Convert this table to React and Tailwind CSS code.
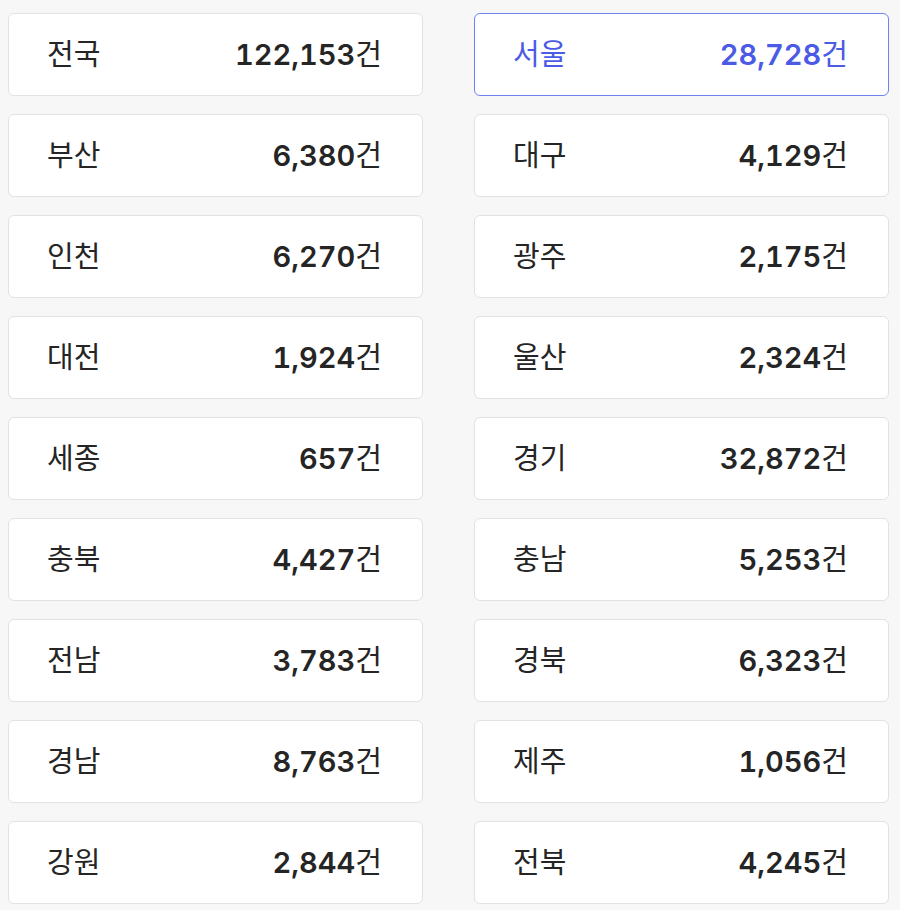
import React from "react";

const data = [
  ["전국", "122,153"],
  ["서울", "28,728"],
  ["부산", "6,380"],
  ["대구", "4,129"],
  ["인천", "6,270"],
  ["광주", "2,175"],
  ["대전", "1,924"],
  ["울산", "2,324"],
  ["세종", "657"],
  ["경기", "32,872"],
  ["충북", "4,427"],
  ["충남", "5,253"],
  ["전남", "3,783"],
  ["경북", "6,323"],
  ["경남", "8,763"],
  ["제주", "1,056"],
  ["강원", "2,844"],
  ["전북", "4,245"],
];

export default function App() {
  return (
    <div
      className="min-h-[910px] w-[900px] bg-[#f7f7f7] pl-[8px] pr-[11px] pt-[13px]"
      style={{ fontFamily: 'Inter, "Noto Sans CJK KR", sans-serif' }}
    >
      <div className="grid grid-cols-2 gap-x-[51px] gap-y-[18px]">
        {data.map(([name, count]) => {
          const active = name === "서울";
          return (
            <div
              key={name}
              className={`flex h-[83px] items-center justify-between rounded-[6px] border bg-white pl-[38px] pr-[40px] ${
                active ? "border-[#6f83ee] text-[#4b5be6]" : "border-[#e2e2e2] text-[#252525]"
              }`}
            >
              <span className="text-[29px] leading-none">{name}</span>
              <span className="text-[29px] leading-none">
                <span className="font-semibold tabular-nums">{count}</span>
                <span>건</span>
              </span>
            </div>
          );
        })}
      </div>
    </div>
  );
}
